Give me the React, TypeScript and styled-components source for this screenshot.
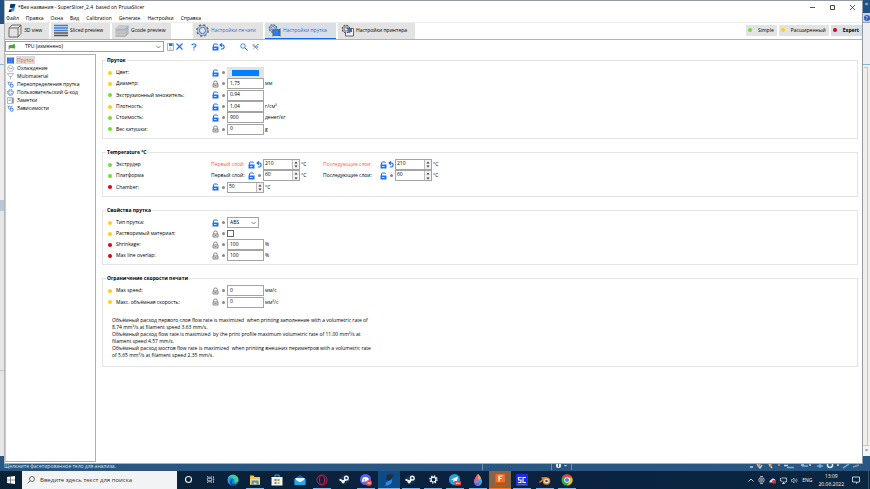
import React from "react";
import styled, { createGlobalStyle, css } from "styled-components";

const Global = createGlobalStyle`
  *, *::before, *::after { box-sizing: border-box; }
  body { margin: 0; overflow: hidden; }
  body, button, input, select { font-family: "Open Sans", "Noto Sans", sans-serif; font-size: 5px; line-height: 7px; color: #000; }
  button { border: 0; padding: 0; background: none; }
  svg { display: block; flex: none; }
`;

/* ---------- desktop ---------- */
const Desktop = styled.div`
  min-height: 100vh; display: flex; flex-direction: column;
  background: #2a5781; white-space: nowrap; cursor: default;
`;
const Stage = styled.div`
  flex: 1; display: grid; grid-template-columns: 4px 1fr 7px;
`;
const LeftEdge = styled.div`
  background: linear-gradient(#1f5384 0 24px, #e9ebee 24px 64px, #8db4d8 64px 65px, #eeedeb 65px 200px, #b9c8d8 200px 211px, #e6e6e6 211px 370px, #c5c8cc 370px 371px, #e6e6e6 371px 456px, #2a5781 456px);
`;
const RightEdge = styled.div`
  display: flex; flex-direction: column; align-items: center;
  background: linear-gradient(#1f5384 0 13px, #cdd3df 13px 22px, #8ea6c2 22px 23px, #eceef2 23px 64px, #8db4d8 64px 65px, #f0efec 65px 445px, #d5d5d5 445px 446px, #f4f4f4 446px 456px, #2a5781 456px);
`;
const EdgeMark = styled.span<{ $light?: boolean }>`
  font-size: 6px; line-height: 9px; color: ${p => (p.$light ? "#fff" : "#444")};
`;
const HelpMark = styled.span`
  margin-top: 6px; width: 6px; height: 6px; border-radius: 50%; background: #3658c0;
  color: #fff; font-size: 5px; line-height: 6px; text-align: center;
`;
const EdgeFrame = styled.span`
  flex: 1; width: 4px; margin: 46px 2px 0 0; border: 1px solid #c9c7bd; border-left: 0;
`;
const Strip = styled.div`
  height: 7px; display: grid; grid-template-columns: 56% 8% 20px 1fr; align-items: start;
  padding-right: 9px; color: #d5e2ee; line-height: 5px;
`;
const StripText = styled.div`
  padding-left: 4px;
`;
const StripCell = styled.div`
  height: 6px; padding-left: 4px; border-left: 1px solid #6d8dab;
`;
const StripRight = styled.div`
  height: 6px; display: flex; justify-content: flex-end; border-left: 1px solid #6d8dab;
`;

/* ---------- window ---------- */
const Window = styled.section`
  display: flex; flex-direction: column; background: #fff; min-width: 0;
  border: 1px solid #9299a2; border-left-color: #b5b5b5; border-bottom-color: #a9aeb2; padding-bottom: 1px;
`;
const TitleBar = styled.header`
  height: 13px; display: flex; align-items: center; gap: 2px; padding-left: 3px;
`;
const WinButtons = styled.div`
  margin-left: auto; display: flex; align-items: center;
`;
const WinButton = styled.button`
  width: 20px; height: 12px; display: grid; place-items: center;
`;
const MenuBar = styled.nav`
  height: 9px; display: flex; align-items: center; padding-left: 1px; gap: 7px; border-bottom: 1px solid #ededed;
`;
const TabBar = styled.div`
  height: 17px; display: flex; border-bottom: 1px solid #8bbaf2;
`;
const Tab = styled.button<{ $active?: boolean; $blue?: boolean; $w: number; $before?: number }>`
  flex: 0 0 ${p => p.$w}px; margin: 0 2px 0 ${p => p.$before || 0}px;
  display: flex; align-items: center; gap: 2px; padding-left: 3px;
  background: ${p => (p.$active ? "#d9dee7" : "#e3e3e3")};
  color: ${p => (p.$blue ? "#1f6fe8" : "#000")};
  border-bottom: 1px solid ${p => (p.$active ? "#0a6cf0" : "transparent")};
`;
const Modes = styled.div`
  margin-left: auto; display: flex; align-items: center; gap: 2px; padding-bottom: 2px;
`;
const Mode = styled.button<{ $on?: boolean }>`
  height: 11px; display: flex; align-items: center; gap: 6px; padding: 0 3px 0 2px;
  background: ${p => (p.$on ? "#d9dee7" : "#e3e3e3")};
  font-weight: ${p => (p.$on ? 700 : 400)};
`;
const Dot = styled.span<{ $c: string }>`
  flex: none; width: 4px; height: 4px; border-radius: 50%; background: ${p => p.$c};
`;
const ToolRow = styled.div`
  display: flex; align-items: center; padding: 1px 0 2px;
`;
const PresetBox = styled.label`
  flex: 0 0 159px; height: 11px; display: flex; align-items: center; border: 1px solid #a0a0a0; padding: 0 2px;
`;
const BareSelect = styled.select`
  appearance: none; border: 0; background: none; flex: 1; min-width: 0; height: 9px; padding: 0 0 0 1px; outline: 0;
`;
const PresetSelect = styled(BareSelect)`
  padding-left: 9px;
`;
const Tool = styled.button<{ $before: number }>`
  margin-left: ${p => p.$before}px;
`;
const Body = styled.div`
  flex: 1; display: grid; grid-template-columns: 91px 1fr; 
`;
const Tree = styled.ul`
  margin: 0; padding: 1px; list-style: none; border: 1px solid #b0b0b0; border-left-color: #ccc;
`;
const TreeItem = styled.li`
  height: 8px; display: flex; align-items: center; gap: 2px;
`;
const TreeLink = styled.a<{ $on?: boolean }>`
  color: ${p => (p.$on ? "#ff5a1f" : "#000")}; text-decoration: none; line-height: 8px; padding: 0 1px;
  ${p => p.$on && css`background: #dcdcdc;`}
`;
const Page = styled.main`
  padding: 3px 4px 0 6px; display: flex; flex-direction: column; gap: 10px;
`;
const Group = styled.fieldset`
  margin: 0; border: 1px solid #e4e4e4; padding: 3px 0 3px 5px; min-width: 0;
`;
const Legend = styled.legend`
  margin-left: -2px; padding: 0 1px; font-weight: 700; height: 7px;
`;
const Rows = styled.div<{ $h: number }>`
  display: grid; grid-auto-rows: 1fr; min-height: ${p => p.$h}px;
`;
const Row = styled.div`
  display: flex; align-items: center;
`;
const Name = styled.span`
  flex: 0 0 99px; padding-left: 4px;
`;
const SubName = styled.span<{ $w: number; $hot?: boolean }>`
  flex: 0 0 ${p => p.$w}px; color: ${p => (p.$hot ? "#ff5a1f" : "#000")};
`;
const Marks = styled.span`
  flex: 0 0 16px; display: grid; grid-template-columns: 8px 8px; place-items: center;
`;
const Bullet = styled.span`
  width: 3px; height: 3px; border-radius: 50%; background: #888;
`;
const Text = styled.input`
  width: 37px; height: 11px; border: 1px solid #a4a4a4; background: #fff; padding: 0 2px 2px; outline: 0; border-radius: 0;
`;
const SpinBox = styled.span<{ $w: number }>`
  width: ${p => p.$w}px; height: 11px; display: flex; border: 1px solid #a4a4a4;
`;
const SpinInput = styled.input`
  flex: 1; min-width: 0; border: 0; padding: 0 1px 2px; outline: 0; background: none;
`;
const SpinButtons = styled.span`
  width: 7px; display: grid; grid-template-rows: 1fr 1fr; border-left: 1px solid #bbb;
`;
const SpinButton = styled.button`
  display: grid; place-items: center; background: #f2f2f2;
`;
const Unit = styled.span<{ $w?: number }>`
  padding-left: 1px; flex: 0 0 ${p => (p.$w ? p.$w + "px" : "auto")};
`;
const ColorButton = styled.button`
  width: 37px; height: 11px; background: #e3e3e3; display: grid; place-items: center;
`;
const Swatch = styled.span`
  width: 27px; height: 6px; background: #0080ff;
`;
const TypeBox = styled.span`
  width: 32px; height: 11px; border: 1px solid #a4a4a4; display: flex; align-items: center; padding: 0 2px 0 1px;
`;
const Check = styled.input`
  appearance: none; width: 7px; height: 7px; margin: 0; border: 1px solid #666; background: #fff;
`;
const Notes = styled.div`
  margin: 9px 0 4px 4px; line-height: 7px; white-space: pre;
`;
const Note = styled.p`
  margin: 0;
`;

/* ---------- taskbar ---------- */
const Taskbar = styled.footer`
  height: 18px; display: flex; align-items: stretch; background: linear-gradient(90deg, #0a2138, #0b2240 65%, #0a2741); color: #f2f5f8;
`;
const Start = styled.button`
  flex: 0 0 22px; display: grid; place-items: center;
`;
const Search = styled.label`
  flex: 0 0 155px; background: #f2f3f4; display: flex; align-items: center; gap: 5px; padding-left: 5px;
`;
const SearchInput = styled.input`
  border: 0; background: none; padding: 0; outline: 0; flex: 1; min-width: 0; font-size: 6px; line-height: 9px;
  &::placeholder { color: #333; opacity: 1; }
`;
const Apps = styled.div`
  flex: 0 1 401px; display: grid; grid-auto-flow: column; grid-auto-columns: 1fr;
`;
const AppButton = styled.button<{ $run?: boolean; $bg?: string; $line?: string }>`
  display: flex; flex-direction: column; align-items: center; justify-content: flex-end;
  background: ${p => p.$bg || "none"};
  &::after { content: ""; width: ${p => (p.$bg ? "100%" : "18px")}; height: 1px;
    background: ${p => (p.$run ? p.$line || "#7fb4e5" : "transparent")}; }
`;
const AppArt = styled.span`
  flex: 1; display: grid; place-items: center;
`;
const Tray = styled.div`
  margin-left: auto; display: flex; align-items: center; gap: 4px; padding-right: 1px;
`;
const Clock = styled.time`
  margin: 0 4px 0 2px; text-align: center; line-height: 8px;
`;
const TrayEnd = styled.span`
  width: 1px; height: 100%; margin-left: 4px; background: #3d5266;
`;

/* ---------- icons ---------- */
const BLUE = "#1b70f5";
const Lock = ({ open = true }: { open?: boolean }) => open ? (
  <svg width="7" height="8" viewBox="0 0 14 16" fill="none" stroke={BLUE} strokeWidth="2">
    <path d="M3 8V4q0-2 2-2h4q2 0 2 2" />
    <path d="M1 7h12v8H1z" fill={BLUE} stroke="none" />
    <path d="M4 11h5" stroke="#fff" strokeWidth="1.600" />
  </svg>
) : (
  <svg width="7" height="8" viewBox="0 0 14 16" fill="none" stroke="#7b7b7b" strokeWidth="1.800">
    <path d="M3.500 8V4.500Q3.500 2 7 2T10.500 4.500V8" />
    <path d="M2 8h10v6H2z" fill="#eee" /><path d="M5 11h4" />
  </svg>
);
const Undo = () => (
  <svg width="7" height="7" viewBox="0 0 14 14" fill="none" stroke={BLUE} strokeWidth="2.200">
    <path d="M2 4h6a4.200 4.200 0 1 1-4 7.500M6 0.500L2 4l4 3.500" />
  </svg>
);
const Chevron = () => (
  <svg width="5" height="4" viewBox="0 0 10 8" fill="none" stroke="#555" strokeWidth="1.400"><path d="M1 2l4 4 4-4" /></svg>
);
const Gear = ({ size }: { size: number }) => (
  <svg width={size} height={size} viewBox="0 0 24 24" fill="none">
    <circle cx="12" cy="12" r="10.500" stroke="#5c6670" strokeWidth="2.400" strokeDasharray="4.200 4.047" />
    <circle cx="12" cy="12" r="9" stroke="#5c6670" strokeWidth="1.300" />
    <circle cx="12" cy="12" r="5.800" stroke={BLUE} strokeWidth="1.800" />
  </svg>
);
const GearSpool = () => (
  <svg width="13" height="13" viewBox="0 0 26 26" fill="none">
    <circle cx="10" cy="9" r="7.600" stroke="#5c6670" strokeWidth="2.200" strokeDasharray="3.500 2.470" />
    <circle cx="10" cy="9" r="6.600" stroke="#5c6670" /><circle cx="10" cy="9" r="4" stroke={BLUE} strokeWidth="1.500" />
    <path d="M10 10h14v14H10z" fill={BLUE} /><path d="M9.500 9v16M24.500 9v16" stroke="#5c6670" strokeWidth="1.500" />
    <path d="M14 11v12M18 11v12" stroke="#6ba4f5" />
  </svg>
);
const GearPrinter = () => (
  <svg width="13" height="13" viewBox="0 0 26 26" fill="none">
    <path d="M11 9h14v15H9v-6" stroke="#444" strokeWidth="1.600" fill="#f4f4f4" />
    <circle cx="10" cy="10" r="7.600" stroke="#555" strokeWidth="2.200" strokeDasharray="3.500 2.470" />
    <circle cx="10" cy="10" r="6.600" stroke="#555" /><circle cx="10" cy="10" r="4" stroke="#555" strokeWidth="1.400" />
    <path d="M14 10h8v6h-3l-2 3-2-3z" fill={BLUE} />
  </svg>
);
const Cube = () => (
  <svg width="14" height="14" viewBox="0 0 28 28" fill="none" stroke="#666" strokeWidth="1.900" strokeLinejoin="round">
    <path d="M2 8h18v18H2zM2 8l6-6h18l-6 6M26 2v17l-6 7" />
  </svg>
);
const Layers = () => (
  <svg width="14" height="13" viewBox="0 0 28 26" strokeWidth="2.800">
    <path d="M0 3h28M0 8h28M0 13h28" stroke="#3a7fe0" /><path d="M0 18h28M0 23h28" stroke="#555" />
  </svg>
);
const Gcode = () => (
  <svg width="14" height="14" viewBox="0 0 28 28">
    <path d="M1 9l7-7h19l-6 7z" fill="#c9c9c9" /><path d="M1 9h20v17H1z" fill="#b9b9b9" /><path d="M21 9l6-7v17l-6 7z" fill="#a5a5a5" />
    <path d="M1 11h20l6-7" fill="none" stroke="#8fb8ee" strokeWidth="2.500" /><path d="M1 16h20l6-7M1 21h20l6-7" fill="none" stroke="#d4d4d4" strokeWidth="1.500" />
  </svg>
);
const Logo = () => (
  <svg width="8" height="8" viewBox="0 0 14 14">
    <path d="M4 0h9l-1 6-5 2-4-2z" fill="#173a5c" /><path d="M12 3l-1 8-5 3H1l2-4 6-3z" fill="#2a8bf2" /><path d="M1 14l2-5 3 1-1 4z" fill="#16273a" />
  </svg>
);
const Spool = () => (
  <svg width="7" height="7" viewBox="0 0 14 14"><path d="M1 1h12v12H1z" fill="#2d78e6" /><path d="M1 1v12M13 1v12" stroke="#555" strokeWidth="1.600" /><path d="M5 2v10M9 2v10" stroke="#5d9af0" /></svg>
);
const CoolIcon = () => (
  <svg width="7" height="7" viewBox="0 0 14 14" fill="none"><circle cx="7" cy="7" r="6" stroke="#888" /><path d="M3 4l4 4 4-2" stroke={BLUE} strokeWidth="1.300" /></svg>
);
const FunnelIcon = () => (
  <svg width="7" height="7" viewBox="0 0 14 14" fill="none" stroke="#8a8f96" strokeWidth="1.200"><path d="M1 1h12L9 7H5zM7 7v6" /></svg>
);
const Wrench = () => (
  <svg width="7" height="7" viewBox="0 0 14 14" fill="none"><circle cx="5" cy="5" r="2.500" stroke={BLUE} strokeWidth="1.500" /><circle cx="9.500" cy="9.500" r="3" stroke={BLUE} strokeWidth="1.700" /><path d="M1 1l3 3M8 4l3-2" stroke="#666" strokeWidth="1.300" /></svg>
);
const NoteIcon = () => (
  <svg width="7" height="7" viewBox="0 0 14 14" fill="none"><path d="M1 1h9v12H1z" stroke="#777" /><path d="M3 4h5M3 7h5" stroke={BLUE} /><path d="M12 1v12" stroke="#555" strokeWidth="2" /></svg>
);
const Save = () => (
  <svg width="7" height="8" viewBox="0 0 14 16" fill="none"><path d="M1 1h12v14H1z" stroke="#7b8794" strokeWidth="1.300" /><path d="M4 1h7v5H4z" fill={BLUE} /><path d="M4 10h6M4 12.500h6" stroke="#aaa" /></svg>
);
const Cross = () => (
  <svg width="7" height="7" viewBox="0 0 14 14" stroke={BLUE} strokeWidth="2.400"><path d="M1 1l12 12M13 1L1 13" /></svg>
);
const Question = () => (
  <svg width="6" height="8" viewBox="0 0 12 16" fill="none" stroke={BLUE} strokeWidth="2.200"><path d="M2 4.500Q2 2 6 2t4 3Q10 7 6 8.500V11M6 13v2.200" /></svg>
);
const Zoom = () => (
  <svg width="8" height="8" viewBox="0 0 16 16" fill="none"><circle cx="6" cy="6" r="4.500" stroke={BLUE} strokeWidth="1.700" /><path d="M9.500 9.500L15 15" stroke="#555" strokeWidth="2" /></svg>
);
const Compare = () => (
  <svg width="7" height="8" viewBox="0 0 14 16" fill="none" strokeWidth="1.300"><path d="M1 3l11 11M11 3L2 13" stroke="#888" /><circle cx="4" cy="5" r="2" stroke="#888" /><circle cx="9.500" cy="8" r="2.200" stroke={BLUE} /><path d="M11 2h2v2h-2z" fill={BLUE} /></svg>
);
const Flag = () => (
  <svg width="8" height="7" viewBox="0 0 16 14"><path d="M2 5l12-3v9l-9-1-2 2z" fill="#4aa82e" /><path d="M2 5v8" stroke="#333" /></svg>
);
const Tri = ({ up }: { up?: boolean }) => (
  <svg width="4" height="3" viewBox="0 0 8 6"><path d={up ? "M1 5l3-4 3 4z" : "M1 1l3 4 3-4z"} fill="#333" /></svg>
);

const Art: Record<string, React.ReactNode> = {
  cortana: <circle cx="12" cy="12" r="8" fill="none" stroke="#e6ebf0" strokeWidth="3" />,
  tasks: <g fill="none" stroke="#dfe5ea" strokeWidth="1.800"><path d="M4 3v3h11V3M4 21v-3h11v3M4 9h11v6H4zM20 3v5M20 14v7" /><path d="M19 10h2v2h-2z" /></g>,
  edge: <><circle cx="12" cy="12" r="11" fill="#1685d9" /><path d="M2 8a11 11 0 0 1 21 5q-1 5-6 4-4-1-2-4 0-5-6-5-4 0-7 0z" fill="#46cf83" /><path d="M12 11q-4 2-2 7 3 4 9 2-5 4-10 2-6-5-1-11z" fill="#0b4f93" /><path d="M2 9q4-6 11-4-6 1-8 6-2 6 2 10Q0 17 2 9z" fill="#2aa8e8" /></>,
  folder: <><path d="M2 3h7l2 3h11v15H2z" fill="#f6c544" /><path d="M2 10h20v11H2z" fill="#ffdb74" /><path d="M5 21v-8h14v8h-4v-4H9v4z" fill="#3a93dd" /></>,
  store: <><path d="M1 6h22v17H1z" fill="#f4f6f8" /><path d="M8 6V2h8v4" fill="none" stroke="#36b0ee" strokeWidth="2" /><path d="M7 10h4v4H7z" fill="#e8502d" /><path d="M13 10h4v4h-4z" fill="#71b52b" /><path d="M7 16h4v4H7z" fill="#2aa0e0" /><path d="M13 16h4v4h-4z" fill="#f5b51f" /></>,
  mail: <><path d="M1 9l11-7 11 7v13H1z" fill="#1464b4" /><path d="M3 8h18v9H3z" fill="#e9f5ff" /><path d="M1 10l11 7 11-7v12H1z" fill="#2ba3ec" /></>,
  opera: <><circle cx="12" cy="12" r="10" fill="none" stroke="#d0154c" strokeWidth="2" /><ellipse cx="12" cy="12" rx="5" ry="9" fill="none" stroke="#d0154c" strokeWidth="2" /></>,
  steam: <><circle cx="12" cy="12" r="11" fill="#12324f" /><path d="M1 12l9 4 5-5" fill="none" stroke="#f0f4f8" strokeWidth="4" /><circle cx="16" cy="9" r="4" fill="none" stroke="#f0f4f8" strokeWidth="3" /><circle cx="9" cy="17" r="3.500" fill="#f0f4f8" /></>,
  discord: <><circle cx="11" cy="11" r="11" fill="#5865f2" /><path d="M6 7q5-2 10 0 2 4 2 8-3 2-4 0H8q-2 2-4 0 0-4 2-8z" fill="#fff" /><circle cx="8.500" cy="12" r="1.500" fill="#5865f2" /><circle cx="18" cy="18" r="6" fill="#ea4a44" /><path d="M15 18h6" stroke="#fff" strokeWidth="2" /></>,
  slicer: <><path d="M9 1h12l-2 9-8 3-5-3z" fill="#202d3b" /><path d="M19 6l-2 12-7 5H4l3-7 9-4z" fill="#2a8bf2" /></>,
  gear: <><circle cx="12" cy="12" r="6.500" fill="none" stroke="#fff" strokeWidth="3" /><circle cx="12" cy="12" r="9.500" fill="none" stroke="#fff" strokeWidth="3.500" strokeDasharray="3.700 3.760" /></>,
  telegram: <><circle cx="11" cy="11" r="11" fill="#2ba0da" /><path d="M4 11l14-6-3 12-4-3-2 2v-4z" fill="#fff" /><rect x="11" y="14" width="13" height="9" rx="2" fill="#e8403a" /><path d="M14 18.500h7" stroke="#fff" strokeWidth="2" /></>,
  drop: <><path d="M12 0q9 9 8 16-2 8-8 8t-8-8q0-7 8-16z" fill="#3dabf2" /><path d="M12 0q-8 9-8 15 5 2 9-2 2-5-1-13z" fill="#f0568c" /><path d="M5 18q6 2 11-4-1 8-4 10-5 0-7-6z" fill="#7b5ce0" /><path d="M12 0q6 6 6 9-3 3-6 2z" fill="#f5a341" /></>,
  fusion: <><rect x="3" y="0" width="19" height="23" rx="2" fill="#f37021" /><path d="M3 17h19v6H3z" fill="#c44f0c" /><path d="M10 15V4h7M10 9h5" fill="none" stroke="#fff" strokeWidth="2.400" /></>,
  sc: <><rect width="24" height="24" fill="#1c2fe0" /><path d="M11 7H5v5h5v5H4M20 7h-6v10h6" fill="none" stroke="#fff" strokeWidth="2.200" /><path d="M3 21h18" stroke="#8fa0ff" /></>,
  blender: <><path d="M1 17l12-10M5 8h10" stroke="#f08a1d" strokeWidth="2.600" /><circle cx="15" cy="14" r="7.500" fill="#f08a1d" /><circle cx="15" cy="14" r="4.500" fill="#fff" /><circle cx="15" cy="14" r="2.700" fill="#235a94" /></>,
  chrome: <><circle cx="12" cy="12" r="11" fill="#34a853" /><path d="M2 7A11 11 0 0 1 22 7H12z" fill="#ea4335" /><path d="M22 7A11 11 0 0 1 12 23l5-9-3-7z" fill="#fbbc05" /><circle cx="12" cy="12" r="5.500" fill="#fff" /><circle cx="12" cy="12" r="4.200" fill="#4285f4" /></>,
};
type TaskApp = { icon: string; label: string; run?: boolean; bg?: string; line?: string; size?: number };
const apps: TaskApp[] = [
  { icon: "cortana", label: "Cortana", size: 9 }, { icon: "tasks", label: "Task view", size: 9 }, { icon: "edge", label: "Edge" },
  { icon: "folder", label: "Explorer", run: true }, { icon: "store", label: "Store" }, { icon: "mail", label: "Mail" },
  { icon: "opera", label: "Opera", run: true }, { icon: "steam", label: "Steam", size: 11 }, { icon: "discord", label: "Discord", run: true },
  { icon: "slicer", label: "SuperSlicer", run: true, bg: "#0d4c87" }, { icon: "steam", label: "Steam", run: true, size: 11 },
  { icon: "gear", label: "Settings", run: true, size: 9 }, { icon: "telegram", label: "Telegram", run: true }, { icon: "drop", label: "Paint", run: true },
  { icon: "fusion", label: "Fusion", run: true, bg: "#8a6244", line: "#ff7a16" }, { icon: "sc", label: "SC", run: true },
  { icon: "blender", label: "Blender", run: true }, { icon: "chrome", label: "Chrome", run: true },
];

/* ---------- parts ---------- */
const Y = "#ffd20a", G = "#72e030", R = "#e00010";

const Mark = ({ locked, undo }: { locked?: boolean; undo?: boolean }) => (
  <Marks><Lock open={!locked} />{undo ? <Undo /> : <Bullet />}</Marks>
);
const Spin = ({ value, label, w }: { value: string; label: string; w: number }) => (
  <SpinBox $w={w}>
    <SpinInput aria-label={label} defaultValue={value} />
    <SpinButtons>
      <SpinButton aria-label="+"><Tri up /></SpinButton>
      <SpinButton aria-label="-"><Tri /></SpinButton>
    </SpinButtons>
  </SpinBox>
);
const Field = ({ c, name, locked, value, unit, children }: { c: string; name: string; locked?: boolean; value?: string; unit?: string; children?: React.ReactNode }) => (
  <Row>
    <Dot $c={c} /><Name>{name}</Name><Mark locked={locked} />
    {children || <Text aria-label={name} defaultValue={value} />}
    {unit && <Unit>{unit}</Unit>}
  </Row>
);
const TempRow = ({ name, value, hot }: { name: string; value: string; hot?: boolean }) => (
  <Row>
    <Dot $c={G} /><Name>{name}</Name>
    <SubName $w={36} $hot={hot}>Первый слой:</SubName><Mark undo={hot} />
    <Spin value={value} label={name + ", первый слой"} w={37} /><Unit $w={23}>°C</Unit>
    <SubName $w={56} $hot={hot}>Последующие слои:</SubName><Mark undo={hot} />
    <Spin value={value} label={name + ", последующие слои"} w={37} /><Unit>°C</Unit>
  </Row>
);

const tree: [string, React.ReactNode][] = [
  ["Пруток", <Spool />], ["Охлаждение", <CoolIcon />], ["Multimaterial", <FunnelIcon />], ["Переопределения прутка", <Wrench />],
  ["Пользовательский G-код", <Gear size={7} />], ["Заметки", <NoteIcon />], ["Зависимости", <Wrench />],
];

export default function App() {
  return (
    <Desktop>
      <Global />
      <Stage>
        <LeftEdge />
        <Window>
          <TitleBar>
            <Logo />*Без названия - SuperSlicer_2.4&nbsp; based on PrusaSlicer
            <WinButtons>
              <WinButton aria-label="Minimize"><svg width="5" height="5" viewBox="0 0 5 5"><path d="M0 2.500h5" stroke="#555" /></svg></WinButton>
              <WinButton aria-label="Maximize"><svg width="5" height="5" viewBox="0 0 5 5"><path d="M.5.5h4v4h-4z" fill="none" stroke="#444" /></svg></WinButton>
              <WinButton aria-label="Close"><svg width="5" height="5" viewBox="0 0 5 5"><path d="M0 0l5 5M5 0L0 5" stroke="#333" strokeWidth=".8" /></svg></WinButton>
            </WinButtons>
          </TitleBar>
          <MenuBar>
            {["Файл", "Правка", "Окна", "Вид", "Calibration", "Generate", "Настройки", "Справка"].map(m => <button key={m}>{m}</button>)}
          </MenuBar>
          <TabBar>
            <Tab $w={44}><Cube />3D view</Tab>
            <Tab $w={59}><Layers />Sliced preview</Tab>
            <Tab $w={59}><Gcode />Gcode preview</Tab>
            <Tab $w={70} $blue $before={20}><Gear size={13} />Настройки печати</Tab>
            <Tab $w={71} $blue $active><GearSpool />Настройки прутка</Tab>
            <Tab $w={77}><GearPrinter />Настройки принтера</Tab>
            <Modes>
              <Mode><Dot $c={G} />Simple</Mode>
              <Mode><Dot $c={Y} />Расширенный</Mode>
              <Mode $on><Dot $c={R} />Expert</Mode>
            </Modes>
          </TabBar>
          <ToolRow>
            <PresetBox>
              <Flag />
              <PresetSelect aria-label="Профиль прутка"><option>TPU (изменено)</option></PresetSelect>
              <Chevron />
            </PresetBox>
            <Tool $before={3} aria-label="Save"><Save /></Tool>
            <Tool $before={2} aria-label="Delete"><Cross /></Tool>
            <Tool $before={8} aria-label="Help"><Question /></Tool>
            <Tool $before={15} aria-label="Lock"><Lock /></Tool>
            <Tool $before={0} aria-label="Undo"><Undo /></Tool>
            <Tool $before={14} aria-label="Search"><Zoom /></Tool>
            <Tool $before={4} aria-label="Compare"><Compare /></Tool>
          </ToolRow>
          <Body>
            <Tree>
              {tree.map(([t, icon], i) => <TreeItem key={t}>{icon}<TreeLink href="#" $on={i === 0}>{t}</TreeLink></TreeItem>)}
            </Tree>
            <Page>
              <Group>
                <Legend>Пруток</Legend>
                <Rows $h={68}>
                  <Field c={Y} name="Цвет:"><ColorButton aria-label="Цвет"><Swatch /></ColorButton></Field>
                  <Field c={Y} name="Диаметр:" locked value="1,75" unit="мм" />
                  <Field c={G} name="Экструзионный множитель:" value="0,94" />
                  <Field c={Y} name="Плотность:" value="1,04" unit="г/см³" />
                  <Field c={G} name="Стоимость:" value="900" unit="денег/кг" />
                  <Field c={G} name="Вес катушки:" locked value="0" unit="g" />
                </Rows>
              </Group>
              <Group>
                <Legend>Temperature °C</Legend>
                <Rows $h={34}>
                  <TempRow name="Экструдер" value="210" hot />
                  <TempRow name="Платформа" value="60" />
                  <Field c={R} name="Chamber:" unit="°C"><Spin value="50" label="Chamber" w={37} /></Field>
                </Rows>
              </Group>
              <Group>
                <Legend>Свойства прутка</Legend>
                <Rows $h={44}>
                  <Field c={Y} name="Тип прутка:"><TypeBox><BareSelect aria-label="Тип прутка"><option>ABS</option></BareSelect><Chevron /></TypeBox></Field>
                  <Field c={Y} name="Растворимый материал:" locked><Check type="checkbox" aria-label="Растворимый материал" /></Field>
                  <Field c={R} name="Shrinkage:" locked value="100" unit="%" />
                  <Field c={R} name="Max line overlap:" locked value="100" unit="%" />
                </Rows>
              </Group>
              <Group>
                <Legend>Ограничение скорости печати</Legend>
                <Rows $h={23}>
                  <Field c={Y} name="Max speed:" locked value="0" unit="мм/с" />
                  <Field c={Y} name="Макс. объёмная скорость:" locked value="0" unit="мм³/с" />
                </Rows>
                <Notes>
                  <Note>{"Объёмный расход первого слоя flow rate is maximized  when printing заполнение with a volumetric rate of\n8.74 mm³/s at filament speed 3.63 mm/s."}</Note>
                  <Note>{"Объёмный расход flow rate is maximized  by the print profile maximum volumetric rate of 11.00 mm³/s at\nfilament speed 4.57 mm/s."}</Note>
                  <Note>{"Объёмный расход мостов flow rate is maximized  when printing внешних периметров with a volumetric rate\nof 5.65 mm³/s at filament speed 2.35 mm/s."}</Note>
                </Notes>
              </Group>
            </Page>
          </Body>
        </Window>
        <RightEdge>
          <EdgeMark $light>×</EdgeMark><HelpMark>?</HelpMark><EdgeFrame /><EdgeMark>×</EdgeMark>
          <svg width="7" height="9" />
        </RightEdge>
      </Stage>
      <Strip>
        <StripText>Щелкните фасетированное тело для анализа.</StripText>
        <StripCell />
        <StripCell>
          <svg width="12" height="5" viewBox="0 0 24 10"><circle cx="5" cy="3" r="5" fill="#eef3f7" /><path d="M5 0v6" stroke="#2a5781" strokeWidth="2" /><path d="M16 2h6l-3 3z" fill="#dfe8f0" /></svg>
        </StripCell>
        <StripRight>
          <svg width="112" height="5" viewBox="0 0 112 5" fill="none" strokeWidth="1.500">
            <path d="M1 3h3M35 1.500h4M52 1h3M60 1h2M88 1h2" stroke="#c9d3dc" />
            <path d="M8 0l3 4 2-3M20 0l3 4" stroke="#b9c9d6" /><path d="M11 0l-2 3M22 0l-1 3M29 1h2" stroke="#d79a5b" />
            <path d="M38 3.500h7M53 2h6M68 2h6M71 0v4M94 4l6-4" stroke="#68b4ea" /><circle cx="81" cy="1" r="2.500" stroke="#d4e8f7" /><path d="M104 3l6-2" stroke="#8a99a5" />
          </svg>
        </StripRight>
      </Strip>
      <Taskbar>
        <Start aria-label="Start"><svg width="8" height="8" viewBox="0 0 16 16"><path d="M0 2l7-1v6.500H0zM8 1l8-1v7.500H8zM0 8.500h7V15l-7-1zM8 8.500h8V16l-8-1z" fill="#fff" /></svg></Start>
        <Search>
          <svg width="8" height="8" viewBox="0 0 16 16" fill="none" stroke="#444" strokeWidth="1.500"><circle cx="10" cy="6" r="5" /><path d="M6.500 9.500L1 15" /></svg>
          <SearchInput aria-label="Поиск" placeholder="Введите здесь текст для поиска" />
        </Search>
        <Apps>
          {apps.map((a, i) => (
            <AppButton key={i} aria-label={a.label} $run={a.run} $bg={a.bg} $line={a.line}>
              <AppArt><svg width={a.size || 12} height={a.size || 12} viewBox="0 0 24 24">{Art[a.icon]}</svg></AppArt>
            </AppButton>
          ))}
        </Apps>
        <Tray>
          <svg width="6" height="4" viewBox="0 0 12 8" fill="none" stroke="#e8edf2" strokeWidth="1.700"><path d="M1 7l5-5 5 5" /></svg>
          <svg width="7" height="8" viewBox="0 0 14 16" fill="none" stroke="#dfe5ea" strokeWidth="1.400"><rect x="2" y="4" width="10" height="8" rx="2" /><circle cx="7" cy="8" r="2" /><path d="M4 1h6M4 15h6" /></svg>
          <svg width="7" height="7" viewBox="0 0 14 14"><path d="M1 9q0-3 3-3 1-4 5-3 4 1 4 5v3H1z" fill="#dfe5ea" /><circle cx="10" cy="10" r="4" fill="#e02b2b" /></svg>
          <svg width="7" height="7" viewBox="0 0 14 14" fill="none" stroke="#e3e8ed" strokeWidth="1.500"><path d="M3 2h10v8H5M1 2v6h3M7 10v3M4 13h6" /></svg>
          <svg width="7" height="7" viewBox="0 0 14 14" fill="none" stroke="#cfd7de" strokeWidth="1.300"><path d="M1 5h2l3-3v10L3 9H1zM8.500 5q1 2 0 4M11 3q2 4 0 8" /></svg>
          <span>ENG</span>
          <Clock>13:09<br />20.06.2022</Clock>
          <svg width="8" height="8" viewBox="0 0 16 16" fill="none" stroke="#e8edf2" strokeWidth="1.600"><path d="M1 2h14v10h-4l-2 3v-3H1z" /></svg>
          <TrayEnd />
        </Tray>
      </Taskbar>
    </Desktop>
  );
}
